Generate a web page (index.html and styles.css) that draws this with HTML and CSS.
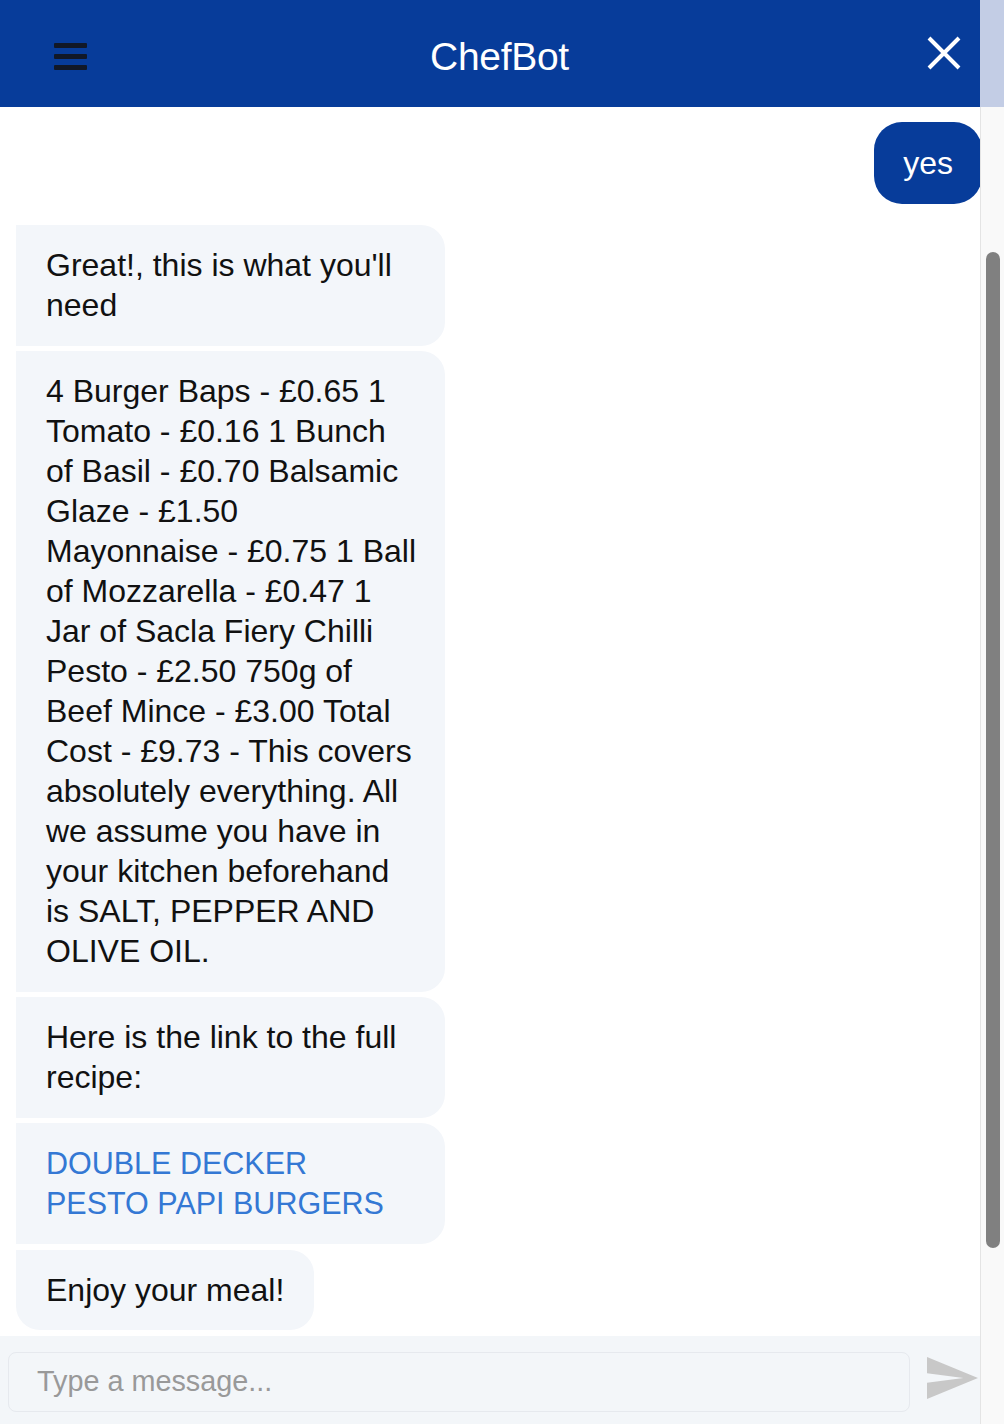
FILE: index.html
```html
<!DOCTYPE html>
<html lang="en">
<head>
<meta charset="utf-8">
<title>ChefBot</title>
<link rel="stylesheet" href="styles.css">
</head>
<body>
<div class="app">
  <header class="header">
    <button class="menu-btn" aria-label="Menu">
      <span class="bar"></span><span class="bar"></span><span class="bar"></span>
    </button>
    <h1 class="title">ChefBot</h1>
    <button class="close-btn" aria-label="Close">
      <svg width="34" height="34" viewBox="0 0 34 34"><path d="M2 2 L32 32 M32 2 L2 32" stroke="#fff" stroke-width="4" stroke-linecap="butt" fill="none"/></svg>
    </button>
  </header>
  <main class="messages">
    <div class="bubble user">yes</div>
    <div class="bubble bot full first">Great!, this is what you'll<br>need</div>
    <div class="bubble bot full">4 Burger Baps - £0.65 1<br>Tomato - £0.16 1 Bunch<br>of Basil - £0.70 Balsamic<br>Glaze - £1.50<br>Mayonnaise - £0.75 1 Ball<br>of Mozzarella - £0.47 1<br>Jar of Sacla Fiery Chilli<br>Pesto - £2.50 750g of<br>Beef Mince - £3.00 Total<br>Cost - £9.73 - This covers<br>absolutely everything. All<br>we assume you have in<br>your kitchen beforehand<br>is SALT, PEPPER AND<br>OLIVE OIL.</div>
    <div class="bubble bot full">Here is the link to the full<br>recipe:</div>
    <div class="bubble bot full"><a class="link" href="#">DOUBLE DECKER<br>PESTO PAPI BURGERS</a></div>
    <div class="bubble bot last">Enjoy your meal!</div>
  </main>
  <footer class="composer">
    <div class="input">Type a message...</div>
    <button class="send-btn" aria-label="Send">
      <svg width="51" height="42" viewBox="2 3 21 18" preserveAspectRatio="none"><path d="M2.01 21L23 12 2.01 3 2 10l15 2-15 2z" fill="#c8c8c8"/></svg>
    </button>
  </footer>
</div>
<div class="scroll-col">
  <div class="scroll-top"></div>
  <div class="scroll-track"><div class="thumb"></div></div>
</div>
</body>
</html>
```

FILE: styles.css
```css
html, body {
  margin: 0;
  padding: 0;
  height: 1424px;
  overflow: hidden;
}
body {
  display: flex;
  font-family: "Liberation Sans", Arial, Helvetica, sans-serif;
  color: #111;
  background: #fff;
}
.app {
  width: 980px;
  display: flex;
  flex-direction: column;
  height: 1424px;
  position: relative;
  z-index: 1;
}
.header {
  height: 107px;
  background: #073c9a;
  display: flex;
  align-items: center;
  padding: 0 19px 0 54px;
  box-sizing: border-box;
  flex: none;
}
.menu-btn {
  background: none;
  border: 0;
  padding: 0;
  width: 33px;
  display: flex;
  flex-direction: column;
  gap: 6px;
  margin-top: 5px;
}
.bar {
  display: block;
  height: 5px;
  width: 33px;
  background: #111827;
  border-radius: 1px;
}
.title {
  flex: 1;
  margin: 6px 0 0;
  text-align: center;
  color: #fff;
  font-weight: 400;
  font-size: 39px;
  padding-right: 15px;
  letter-spacing: -0.3px;
}
.close-btn {
  background: none;
  border: 0;
  padding: 0;
  width: 34px;
  height: 34px;
  display: flex;
  margin-bottom: 2px;
}
.messages {
  flex: 1;
  display: flex;
  flex-direction: column;
  align-items: flex-start;
  padding-top: 15px;
  background: #fff;
  overflow: hidden;
}
.bubble {
  font-size: 32px;
  line-height: 40px;
  padding: 20px 30px 21px;
  box-sizing: border-box;
  white-space: nowrap;
}
.user {
  align-self: flex-end;
  background: #073c9a;
  color: #fff;
  border-radius: 28px;
  height: 82px;
  padding: 21px 29px 0;
  margin-right: -2px;
}
.bot {
  background: #f3f6fa;
  color: #111;
  margin-left: 16px;
  margin-bottom: 5px;
  border-radius: 0 24px 24px 0;
}
.first {
  margin-top: 21px;
}
.full {
  width: 429px;
}
.bot.last {
  border-radius: 0 24px 24px 24px;
  margin-bottom: 0;
  margin-top: 1px;
  padding-bottom: 20px;
}
.link {
  color: #3478d4;
  text-decoration: none;
  font-size: 30.5px;
}
.composer {
  height: 88px;
  background: #f3f6f9;
  display: flex;
  align-items: flex-start;
  padding-left: 8px;
  box-sizing: border-box;
  flex: none;
}
.input {
  width: 902px;
  height: 60px;
  margin-top: 16px;
  box-sizing: border-box;
  border: 1px solid #e6e9ee;
  border-radius: 8px;
  background: #f3f6f9;
  color: #999;
  font-size: 28.8px;
  line-height: 56px;
  padding-left: 28px;
}
.send-btn {
  background: none;
  border: 0;
  padding: 0;
  margin: 21px 0 0 17px;
  width: 51px;
  height: 42px;
  display: flex;
}
.scroll-col {
  width: 24px;
  display: flex;
  flex-direction: column;
}
.scroll-top {
  height: 107px;
  background: #c3cde5;
}
.scroll-track {
  flex: 1;
  background: #f9f9f9;
  border-left: 1px solid #e4e4e4;
  padding: 145px 0 0 5px;
}
.thumb {
  width: 14px;
  height: 996px;
  background: #808080;
  border-radius: 7px;
}
```
